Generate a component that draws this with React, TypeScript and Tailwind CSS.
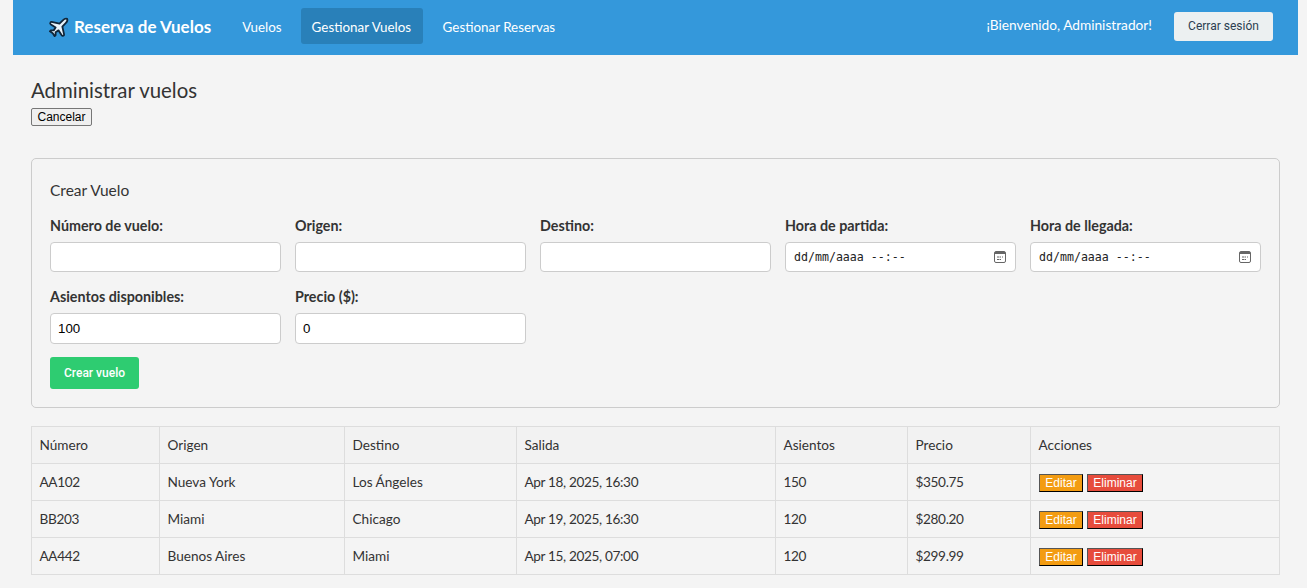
const flights = [
  { num: "AA102", from: "Nueva York", to: "Los Ángeles", dep: "Apr 18, 2025, 16:30", seats: 150, price: "$350.75" },
  { num: "BB203", from: "Miami", to: "Chicago", dep: "Apr 19, 2025, 16:30", seats: 120, price: "$280.20" },
  { num: "AA442", from: "Buenos Aires", to: "Miami", dep: "Apr 15, 2025, 07:00", seats: 120, price: "$299.99" },
];

const PlaneIcon = () => (
  <svg width="23" height="23" viewBox="0 0 24 24" className="ml-[-1px] mr-[4px] mt-[-1px]">
    <path
      d="M17.8 19.2 16 11l3.500-3.500C21 6 21.500 4 21 3c-1-.5-3 0-4.500 1.500L13 8 4.800 6.200c-.5-.1-.9.100-1.100.5l-.3.500c-.2.500-.1 1 .3 1.300L9 12l-2 3H4l-1 1 3 2 2 3 1-1v-3l3-2 3.500 5.300c.3.400.8.500 1.300.300l.5-.2c.4-.3.600-.7.500-1.200z"
      fill="#eaf4fb"
      stroke="#10263a"
      strokeWidth="1.900"
      strokeLinejoin="round"
    />
  </svg>
);

const CalendarIcon = () => (
  <svg width="12" height="12" viewBox="0 0 12 12" className="text-[#666]">
    <rect x="0.500" y="0.500" width="11" height="11" rx="1.500" fill="none" stroke="currentColor" />
    <rect x="1" y="1" width="10" height="2" fill="currentColor" />
    <path d="M3 6h2M5.500 6H7M8 6h1M3 8.500h2M5.500 8.500H7" stroke="currentColor" />
  </svg>
);

const Field = ({ label, value = "", h = "h-[30px]" }: any) => (
  <div>
    <label className="block text-[14.300px] leading-[19px] font-bold text-[#333] mb-[7px]">{label}</label>
    <input
      defaultValue={value}
      className={`${h} w-full bg-white border border-[#ccc] rounded-[4px] px-[7px] text-[13.300px] text-black outline-none font-['Liberation_Sans',sans-serif]`}
    />
  </div>
);

const DateField = ({ label }: any) => (
  <div>
    <label className="block text-[14.300px] leading-[19px] font-bold text-[#333] mb-[7px]">{label}</label>
    <div className="h-[30px] w-full bg-white border border-[#ccc] rounded-[4px] pl-[8px] pr-[9px] flex items-center justify-between">
      <span className="mt-[2px] font-['DejaVu_Sans_Mono',monospace] text-[11.600px] text-[#222] whitespace-pre">dd/mm/aaaa --:--</span>
      <CalendarIcon />
    </div>
  </div>
);

const Td = ({ children, num }: any) => (
  <td className={`border border-[#ddd] px-[7.500px] h-[37px] text-[13.600px] text-[#333] ${num ? "tracking-[-0.350px]" : ""}`}>
    {children}
  </td>
);

export default function App() {
  return (
    <div className="min-h-screen bg-[#f4f4f4] font-['Lato',sans-serif] text-[#333] pl-[13px] pr-[9px]">
      {/* navbar */}
      <nav className="h-[55px] bg-[#3498db] flex items-center justify-between pl-[35px] pr-[25px] text-white">
        <div className="flex items-center">
          <PlaneIcon />
          <span className="text-[17px] font-bold mt-[-1px]">Reserva de Vuelos</span>
          <div className="flex items-center ml-[19px] gap-[8px] text-[13.400px] mt-[-4px]">
            <a className="ml-[1px] px-[11px] pt-[4px] h-[36px] flex items-center">Vuelos</a>
            <a className="px-[11px] pt-[4px] h-[36px] w-[122px] flex items-center bg-[#2980b9] rounded-[3px]">Gestionar Vuelos</a>
            <a className="ml-[1px] px-[11px] pt-[4px] h-[36px] flex items-center">Gestionar Reservas</a>
          </div>
        </div>
        <div className="flex items-center gap-[22px] mt-[-3px]">
          <span className="text-[13.700px] mb-[2px]">¡Bienvenido, Administrador!</span>
          <button className="w-[99px] h-[29px] bg-[#ecf0f1] rounded-[3px] text-[12px] text-[#2c3e50] font-['Roboto',sans-serif]">
            Cerrar sesión
          </button>
        </div>
      </nav>

      <main className="px-[18px] pt-[21px]">
        <h2 className="text-[20.400px] leading-[28px] text-[#333]">Administrar vuelos</h2>
        <button className="block mt-[4px] h-[18px] w-[61px] bg-[#efefef] border border-[#767676] rounded-[2px] text-[12px] leading-none text-black font-['Liberation_Sans',sans-serif]">
          Cancelar
        </button>

        {/* form */}
        <section className="mt-[32px] h-[250px] border border-[#ccc] rounded-[5px] px-[18px] pt-[21px]">
          <h3 className="text-[15.500px] leading-[20px] text-[#333]">Crear Vuelo</h3>
          <div className="grid grid-cols-5 gap-x-[14px] gap-y-[15px] mt-[16px]">
            <Field label="Número de vuelo:" />
            <Field label="Origen:" />
            <Field label="Destino:" />
            <DateField label="Hora de partida:" />
            <DateField label="Hora de llegada:" />
            <Field label="Asientos disponibles:" value="100" h="h-[31px]" />
            <Field label="Precio ($):" value="0" h="h-[31px]" />
          </div>
          <button className="mt-[13px] w-[89px] h-[32px] bg-[#2ecc71] rounded-[3px] text-[12px] font-medium text-white font-['Roboto',sans-serif]">
            Crear vuelo
          </button>
        </section>

        {/* flights table */}
        <table className="mt-[18px] w-full table-fixed border-collapse">
          <colgroup>
            <col className="w-[128px]" />
            <col className="w-[185px]" />
            <col className="w-[172px]" />
            <col className="w-[259px]" />
            <col className="w-[132px]" />
            <col className="w-[123px]" />
            <col />
          </colgroup>
          <thead>
            <tr className="bg-[#f2f2f2]">
              {["Número", "Origen", "Destino", "Salida", "Asientos", "Precio", "Acciones"].map((h) => (
                <th key={h} className="border border-[#ddd] px-[7.500px] h-[37px] text-left text-[13.600px] font-normal text-[#333]">
                  {h}
                </th>
              ))}
            </tr>
          </thead>
          <tbody>
            {flights.map((f) => (
              <tr key={f.num}>
                <Td num>{f.num}</Td>
                <Td>{f.from}</Td>
                <Td>{f.to}</Td>
                <Td num>{f.dep}</Td>
                <Td num>{f.seats}</Td>
                <Td num>{f.price}</Td>
                <td className="border border-[#ddd] px-[8px] h-[37px]">
                  <div className="flex gap-[4px] mt-[1px] font-['Liberation_Sans',sans-serif]">
                    <button className="w-[44px] h-[18px] bg-[#f39c12] border border-t-[#555] border-l-[#555] border-r-black border-b-black text-[12px] leading-none text-white">
                      Editar
                    </button>
                    <button className="w-[56px] h-[18px] bg-[#e74c3c] border border-t-[#555] border-l-[#555] border-r-black border-b-black text-[12px] leading-none text-white">
                      Eliminar
                    </button>
                  </div>
                </td>
              </tr>
            ))}
          </tbody>
        </table>
      </main>
    </div>
  );
}
